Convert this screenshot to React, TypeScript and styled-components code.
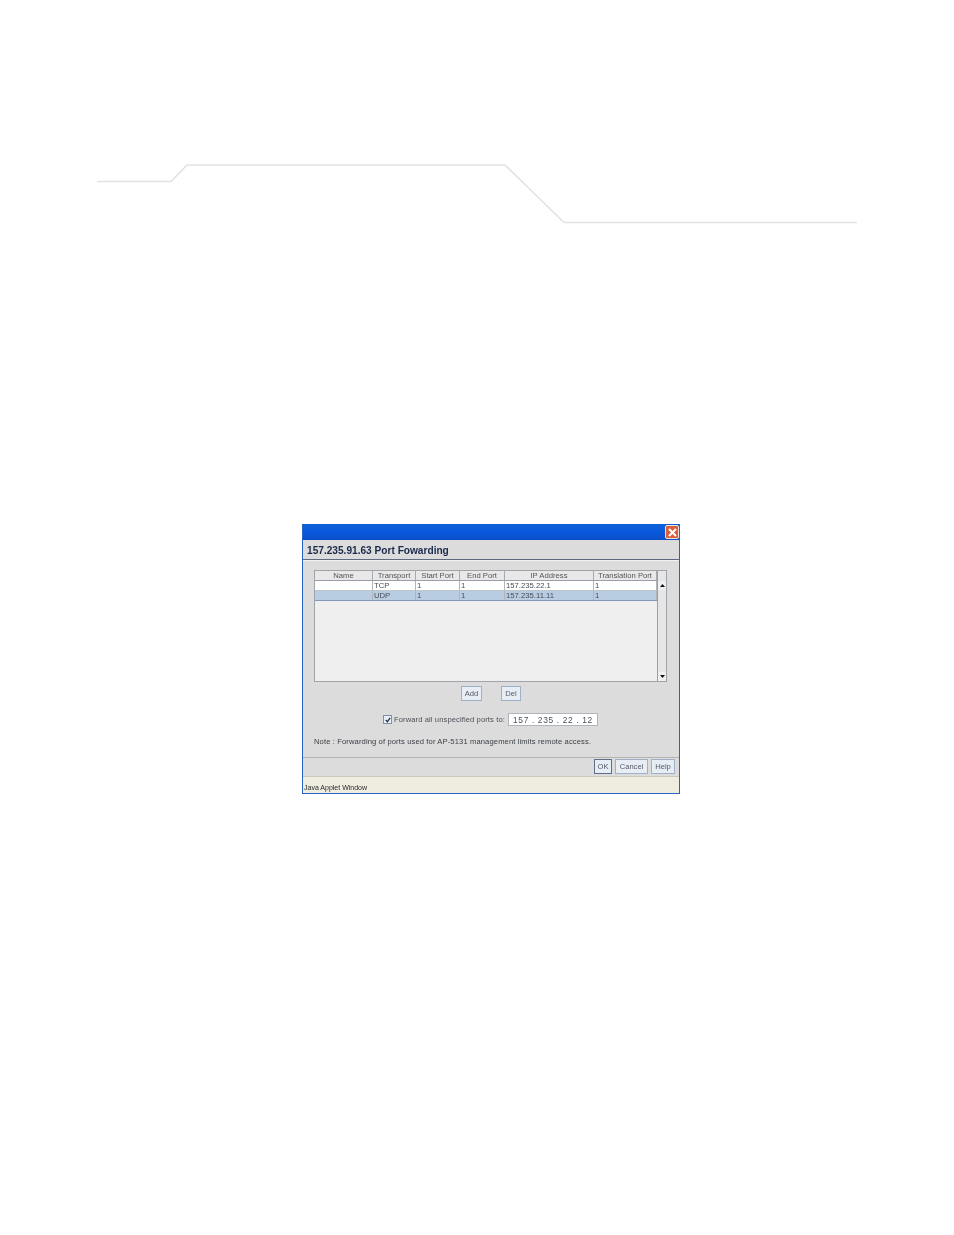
import styled, { createGlobalStyle } from "styled-components"

const GlobalStyle = createGlobalStyle`
    html, body {
        margin: 0;
        padding: 0;
        background: #ffffff;
    }
    body {
        font-family: "Liberation Sans", Arial, sans-serif;
    }
`

const columns = [
    { name: "Name", width: 58 },
    { name: "Transport", width: 43 },
    { name: "Start Port", width: 44 },
    { name: "End Port", width: 45 },
    { name: "IP Address", width: 89 },
    { name: "Translation Port", width: 63 },
]

const rows = [
    { cells: ["", "TCP", "1", "1", "157.235.22.1", "1"], selected: false },
    { cells: ["", "UDP", "1", "1", "157.235.11.11", "1"], selected: true },
]

const gridColumns = columns.map((c) => `${c.width}px`).join(" ")

export default function App() {
    return (
        <Page>
            <GlobalStyle />
            <HeaderLine viewBox="0 0 954 70" aria-hidden="true">
                <polyline
                    points="97,21.5 171,21.5 187,5 505,5 564,62.5 857,62.5"
                    fill="none"
                    stroke="#e2e2e2"
                    strokeWidth="1.6"
                />
            </HeaderLine>
            <Window>
                <TitleBar>
                    <CloseButton aria-label="Close">
                        <svg width="9" height="9" viewBox="0 0 9 9">
                            <path
                                d="M1 1 L8 8 M8 1 L1 8"
                                stroke="#ffffff"
                                strokeWidth="2"
                            />
                        </svg>
                    </CloseButton>
                </TitleBar>
                <Body>
                    <Heading>157.235.91.63 Port Fowarding</Heading>
                    <Panel>
                        <TableBox>
                            <TableMain>
                                <HeaderRow>
                                    {columns.map((c) => (
                                        <HeaderCell key={c.name}>{c.name}</HeaderCell>
                                    ))}
                                </HeaderRow>
                                {rows.map((row) => (
                                    <Row key={row.cells[1]} $selected={row.selected}>
                                        {row.cells.map((cell, i) => (
                                            <Cell key={i}>{cell}</Cell>
                                        ))}
                                    </Row>
                                ))}
                            </TableMain>
                            <ScrollBar>
                                <ScrollArrow>
                                    <svg width="5" height="3" viewBox="0 0 5 3">
                                        <path d="M2.5 0 L5 3 L0 3 Z" fill="#111111" />
                                    </svg>
                                </ScrollArrow>
                                <ScrollArrow>
                                    <svg width="5" height="3" viewBox="0 0 5 3">
                                        <path d="M0 0 L5 0 L2.5 3 Z" fill="#111111" />
                                    </svg>
                                </ScrollArrow>
                            </ScrollBar>
                        </TableBox>
                        <TableActions>
                            <ActionButton $width={21}>Add</ActionButton>
                            <ActionButton $width={20}>Del</ActionButton>
                        </TableActions>
                        <ForwardRow>
                            <CheckBox>
                                <svg width="6" height="6" viewBox="0 0 7 7">
                                    <path
                                        d="M1 3.5 L2.8 5.6 L6 1"
                                        fill="none"
                                        stroke="#1b2a4a"
                                        strokeWidth="1.5"
                                    />
                                </svg>
                            </CheckBox>
                            <SmallText>Forward all unspecified ports to:</SmallText>
                            <IpField>
                                <span>157</span>
                                <span>.</span>
                                <span>235</span>
                                <span>.</span>
                                <span>22</span>
                                <span>.</span>
                                <span>12</span>
                            </IpField>
                        </ForwardRow>
                        <Note>
                            Note : Forwarding of ports used for AP-5131 management limits
                            remote access.
                        </Note>
                    </Panel>
                    <Footer>
                        <FooterButton $width={18} $focused>
                            OK
                        </FooterButton>
                        <FooterButton $width={33}>Cancel</FooterButton>
                        <FooterButton $width={24}>Help</FooterButton>
                    </Footer>
                </Body>
                <StatusBar>Java Applet Window</StatusBar>
            </Window>
        </Page>
    )
}

const Page = styled.main`
    width: 954px;
    height: 1235px;
    padding-top: 160px;
    box-sizing: border-box;
    overflow: hidden;
    background: #ffffff;
`

const HeaderLine = styled.svg`
    display: block;
    width: 954px;
    height: 70px;
`

const Window = styled.section`
    display: flex;
    flex-direction: column;
    width: 378px;
    height: 270px;
    margin: 294px 0 0 302px;
    box-sizing: border-box;
    border: 1px solid #2a62c4;
    border-top: 0;
    background: #dcdcdc;
    filter: blur(0.35px);
`

const TitleBar = styled.header`
    display: flex;
    justify-content: flex-end;
    align-items: center;
    flex: none;
    height: 16px;
    background: linear-gradient(180deg, #0f62d8 0%, #0a58dc 55%, #0b4fc8 100%);
`

const CloseButton = styled.div`
    display: flex;
    justify-content: center;
    align-items: center;
    width: 14px;
    height: 14px;
    box-sizing: border-box;
    border: 1px solid #f0e0d8;
    border-radius: 2px;
    background: #d9603c;
`

const Body = styled.div`
    display: flex;
    flex: 1;
    flex-direction: column;
    min-height: 0;
`

const Heading = styled.h1`
    flex: none;
    height: 20px;
    margin: 0;
    padding-left: 4px;
    box-sizing: border-box;
    border-bottom: 1px solid #5d6a80;
    color: #1b2a4a;
    font-size: 10.15px;
    font-weight: 700;
    line-height: 21px;
    white-space: nowrap;
`

const Panel = styled.div`
    flex: 1;
    min-height: 0;
    padding: 10px 11px 0;
    box-shadow: inset 0 1px 0 #f2f2f2;
`

const TableBox = styled.div`
    display: flex;
    width: 353px;
    height: 112px;
    box-sizing: border-box;
    border: 1px solid #a0a4aa;
    background: #efefef;
`

const TableMain = styled.div`
    flex: none;
    width: 342px;
`

const HeaderRow = styled.div`
    display: grid;
    grid-template-columns: ${gridColumns};
    height: 9px;
    border-bottom: 1px solid #9a9ea6;
    background: #e8e8e8;
`

const HeaderCell = styled.div`
    overflow: hidden;
    border-right: 1px solid #a6a9af;
    box-sizing: border-box;
    color: #555555;
    font-size: 7.7px;
    line-height: 10px;
    text-align: center;
    white-space: nowrap;
`

const Row = styled.div<{ $selected: boolean }>`
    display: grid;
    grid-template-columns: ${gridColumns};
    height: 10px;
    box-sizing: border-box;
    border-bottom: 1px solid ${(p) => (p.$selected ? "#8499b5" : "#c0c3c8")};
    background: ${(p) => (p.$selected ? "#b9cde2" : "#ffffff")};
`

const Cell = styled.div`
    overflow: hidden;
    padding-left: 1px;
    border-right: 1px solid #b0b5bc;
    box-sizing: border-box;
    color: #484c55;
    font-size: 7.7px;
    line-height: 9px;
    white-space: nowrap;
`

const ScrollBar = styled.div`
    display: flex;
    flex: 1;
    flex-direction: column;
    justify-content: space-between;
    padding-top: 9px;
    border-left: 1px solid #9a9ea6;
    background: #e6e6e6;
`

const ScrollArrow = styled.div`
    display: flex;
    justify-content: center;
    align-items: center;
    height: 9px;
    margin-top: 1px;
    background: #f0f0f0;
`

const TableActions = styled.div`
    display: flex;
    justify-content: center;
    gap: 19px;
    margin-top: 4px;
`

const ActionButton = styled.div<{ $width: number }>`
    display: flex;
    justify-content: center;
    align-items: center;
    width: ${(p) => p.$width}px;
    height: 15px;
    box-sizing: border-box;
    border: 1px solid #a0b0c6;
    background: #e7edf4;
    color: #555a63;
    font-size: 7.6px;
`

const ForwardRow = styled.div`
    display: flex;
    align-items: center;
    height: 13px;
    margin-top: 12px;
    padding-left: 69px;
`

const CheckBox = styled.div`
    display: flex;
    flex: none;
    justify-content: center;
    align-items: center;
    width: 7px;
    height: 7px;
    margin-right: 2px;
    border: 1px solid #7f90aa;
    background: #e8eef6;
`

const SmallText = styled.span`
    color: #4d5158;
    font-size: 7.6px;
    letter-spacing: 0.1px;
    white-space: nowrap;
`

const IpField = styled.div`
    display: flex;
    justify-content: space-between;
    align-items: center;
    flex: none;
    width: 90px;
    height: 13px;
    margin-left: 3px;
    padding: 0 4px;
    box-sizing: border-box;
    border: 1px solid #b0b5bc;
    background: #ffffff;
    color: #4d5158;
    font-size: 8.4px;
    letter-spacing: 0.7px;
`

const Note = styled.p`
    margin: 11px 0 0;
    color: #3c4047;
    font-size: 7.6px;
    line-height: 9px;
    letter-spacing: 0.12px;
    white-space: nowrap;
`

const Footer = styled.div`
    display: flex;
    flex: none;
    justify-content: flex-end;
    align-items: flex-start;
    gap: 3px;
    height: 20px;
    padding: 1px 4px 0 0;
    box-sizing: border-box;
    border-top: 1px solid #b4b4b4;
    border-bottom: 1px solid #c9c9c0;
`

const FooterButton = styled.div<{ $width: number; $focused?: boolean }>`
    display: flex;
    justify-content: center;
    align-items: center;
    width: ${(p) => p.$width}px;
    height: 15px;
    box-sizing: border-box;
    border: 1px solid ${(p) => (p.$focused ? "#5e6f88" : "#a0b0c6")};
    background: #e7edf4;
    color: #555a63;
    font-size: 7.6px;
`

const StatusBar = styled.footer`
    flex: none;
    height: 16px;
    overflow: hidden;
    padding-left: 1px;
    background: #efece0;
    color: #2a2a2a;
    font-size: 7px;
    line-height: 21px;
    white-space: nowrap;
`
